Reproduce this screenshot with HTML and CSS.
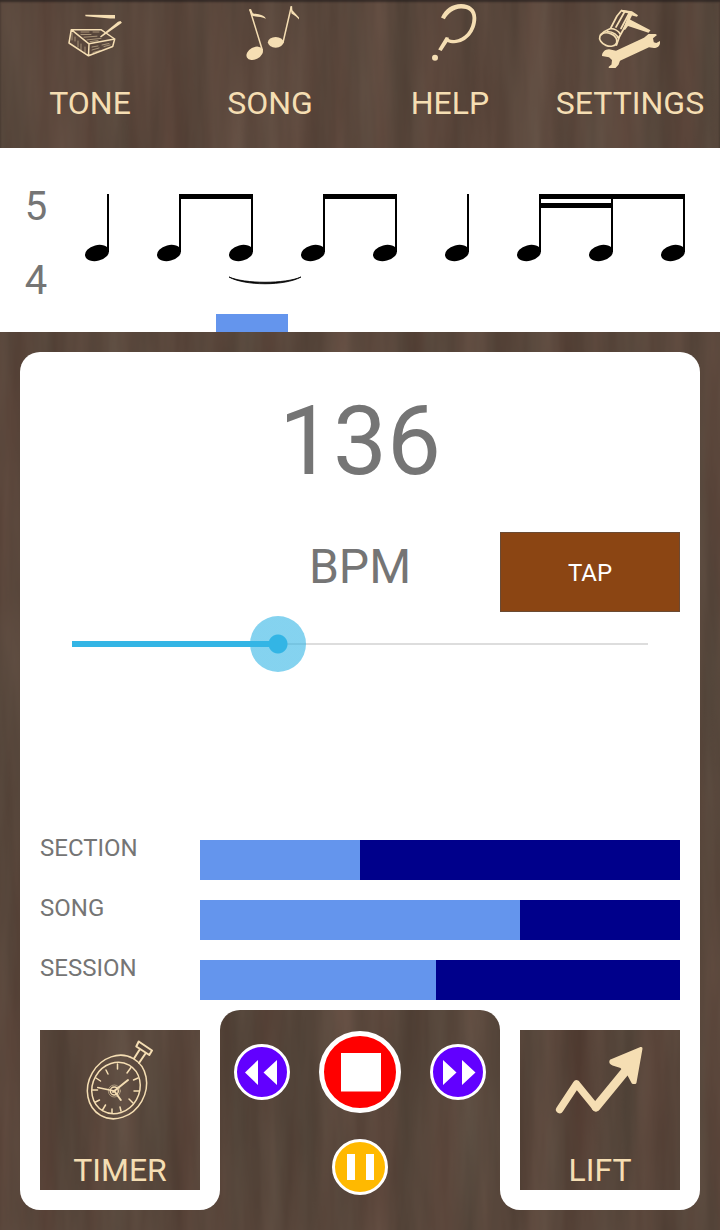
FILE: index.html
```html
<!DOCTYPE html>
<html lang="en">
<head>
<meta charset="utf-8">
<meta name="viewport" content="width=device-width, initial-scale=1">
<title>Metronome</title>
<link rel="stylesheet" href="styles.css">
</head>
<body class="wood">
<nav class="topbar">
  <button class="nav-item" type="button">
    <svg class="nav-icon" viewBox="0 0 80 72" aria-hidden="true">
      <path class="solid" d="M35.300 14.800L65 15v3.600l-5-.2-24.500-2.200z"/>
      <path class="solid" d="M50 36.500L68 21.800l2.500-.8 1.400 1.800-3 2.200-18 12.500z"/>
      <g class="line">
        <path stroke-width="1.500" d="M21.300 29.700H51L64.700 39 39 43.800zM21.300 29.700L19 43l19.500 12.800L39 43.800M38.500 55.800L62.700 46.500l2-7.500"/>
        <path stroke-width=".5" d="M31 32h8m4 0h6M31 34.500h10m-7 2.700l13-1m-10 3.700l14-1.500m-11 3.200l8-1M22 33v7m3-3v4m3 0v6m3-3v6m4-3v6M42 47l6-1m4-1l7-1.500M42 50l7-2m5-1.500l6-1.500M43 52.500l7-2"/>
      </g>
    </svg>
    <span class="nav-label">TONE</span>
  </button>
  <button class="nav-item" type="button">
    <svg class="nav-icon" viewBox="0 0 80 72" aria-hidden="true">
      <ellipse class="solid" cx="24.700" cy="53.300" rx="8.800" ry="6" transform="rotate(-28 24.700 53.300)"/>
      <ellipse class="solid" cx="45.700" cy="42.300" rx="7.800" ry="5.400"/>
      <path class="line" stroke-width="1.500" d="M32.300 50L20 10M53 42.500L61.200 7"/>
      <path class="solid" d="M19 9.500l2-.5 1.800 4.200c4 1.500 10 .3 13.200 5.500-4-2-8-1.500-13.500-2.700zM60.300 6.500l1.800-.5.300 4.200 6.600 7.300v2c-2.500-2.500-4-4-7.500-6z"/>
    </svg>
    <span class="nav-label">SONG</span>
  </button>
  <button class="nav-item" type="button">
    <svg class="nav-icon" viewBox="0 0 80 72" aria-hidden="true">
      <path class="solid" d="M31 17.500C35 9 42 4 51 4c9 0 15.300 5 15.300 14C66.300 31 57 43 44 43.200c-2.500 0-5-.5-6.500-1.300L31.600 51l-3.400-1.500L35.800 37l3.200.8-.4 1.200c2 1 4 1.200 6 1C54 39 62.500 30 62.500 18 62.500 11 57.500 8.300 51 8.500c-7.500.3-12.500 4.500-16.200 10.700z"/>
      <circle class="solid" cx="25" cy="57.700" r="3"/>
    </svg>
    <span class="nav-label">HELP</span>
  </button>
  <button class="nav-item" type="button">
    <svg class="nav-icon" viewBox="0 0 80 72" aria-hidden="true">
      <g class="line" stroke-width="1.700">
        <ellipse cx="18.300" cy="39.500" rx="9" ry="6.300" transform="rotate(22 18.300 39.500)"/>
        <path d="M10.500 35l4-3.500 6-3L27 16l4.500-5.500 10 2M26.500 45l3-8.500 8-14.500M20.500 28.500q7 .5 10 6M17.500 31.500c6 0 10 4 11 7M26 27L34.500 12M31 28.500L39 13.500"/>
      </g>
      <path class="solid" d="M31 9.700l11 1.600 6 4-1 1.400-5-1.200-2 4 20.500 10.700-2 2.600L38 26l-3 4-2-1 6-15.500-7-1.500z"/>
      <path class="solid" d="M12 56c0-4 3-6.800 7-6.800l7 1.500 28-13 4.500-3.700h7l1.500 1-4 3.200.8 4 2.500.8 3.700-2v2c0 3-3 5-6 5l-5-.8-29 13.500-1.500 4-3 3.300h-6.500l-.5-1 3-2.500.5-4.500-3-2.800z"/>
    </svg>
    <span class="nav-label">SETTINGS</span>
  </button>
</nav>

<section class="staff" aria-label="Rhythm">
  <div class="time-signature"><span>5</span><span>4</span></div>
  <svg class="score" viewBox="72 148 648 184" role="img" aria-label="Rhythm pattern">
    <defs>
      <g id="note">
        <ellipse cx="97" cy="253" rx="12.200" ry="7.800" transform="rotate(-14 97 253)"/>
        <path d="M107 194h2v58h-2z"/>
      </g>
    </defs>
    <use href="#note"/>
    <use href="#note" x="72"/>
    <use href="#note" x="144"/>
    <use href="#note" x="216"/>
    <use href="#note" x="288"/>
    <use href="#note" x="360"/>
    <use href="#note" x="432"/>
    <use href="#note" x="504"/>
    <use href="#note" x="576"/>
    <path d="M179 194h74v5h-74zM323 194h74v5h-74zM539 194h146v5H539zM539 203h74v5h-74z"/>
    <path d="M229 277c16 7 56 7 72 0-16 9-56 9-72 0z" stroke="#000" stroke-width=".8"/>
    <path class="playhead" d="M216 314h72v18h-72z"/>
  </svg>
</section>

<main class="main">
  <section class="card">
    <output class="tempo" id="tempo" for="speed">136</output>
    <div class="tempo-row">
      <label class="unit" for="speed">BPM</label>
      <button class="tap" type="button">TAP</button>
    </div>
    <input class="speed" id="speed" type="range" min="30" max="326" value="136">
    <div class="meters">
      <label class="meter-label" for="section">SECTION</label>
      <progress class="meter" id="section" max="480" value="160"></progress>
      <label class="meter-label" for="song">SONG</label>
      <progress class="meter" id="song" max="480" value="320"></progress>
      <label class="meter-label" for="session">SESSION</label>
      <progress class="meter" id="session" max="480" value="236"></progress>
    </div>
  </section>

  <div class="dock">
    <div class="dock-side">
      <button class="tile wood" type="button">
        <svg class="tile-icon" viewBox="-10 0 100 90" aria-hidden="true">
          <g class="line" stroke-width="1.500">
            <ellipse cx="37" cy="52" rx="28.500" ry="32.800" transform="rotate(30 37 52)"/>
            <ellipse cx="36" cy="53" rx="23.500" ry="26.300" transform="rotate(30 36 53)"/>
            <path stroke-width="2" d="M58.700 6.500l13.300 9-2.700 4.500-13-8.500zM60 14l-6 9.500M65.500 18.500L59 28"/>
            <path d="M37.500 29v5M51 32.500l-4 5.500M26 35l2 4M16 43l4.500 3M58 43l-4.500 2M59 56h-5M53 68l-4-4M41 76l-1-4M32 78v-4M22.500 75l3-5M15.500 67l4-2M12.500 55h5"/>
            <circle cx="34.300" cy="56" r="4"/>
            <circle stroke-width=".5" cx="34.300" cy="56" r="6"/>
            <path d="M34.300 56L17.700 52.500"/>
            <path stroke-width="2" d="M33 57l15-12M34.300 56l6.500 9"/>
          </g>
        </svg>
        <span class="tile-label">TIMER</span>
      </button>
    </div>
    <div class="dock-center">
      <div class="transport wood">
        <button class="round skip" type="button" aria-label="Previous">
          <svg viewBox="0 0 56 56"><circle cx="28" cy="28" r="26.500"/><path d="M24 16v25L11 28.500zM43 16v25L29.500 28.500z"/></svg>
        </button>
        <button class="round stop" type="button" aria-label="Stop">
          <svg viewBox="0 0 82 82"><circle cx="41" cy="41" r="38.500"/><path d="M22 22h40v38.500H22z"/></svg>
        </button>
        <button class="round skip next" type="button" aria-label="Next">
          <svg viewBox="0 0 56 56"><circle cx="28" cy="28" r="26.500"/><path d="M13 16v25l13.500-12.500zM32 16v25l13.500-12.500z"/></svg>
        </button>
        <button class="round pause" type="button" aria-label="Pause">
          <svg viewBox="0 0 56 56"><circle cx="28" cy="28" r="26.500"/><path d="M15 15h8v26h-8zM34 15h8v26h-8z"/></svg>
        </button>
      </div>
    </div>
    <div class="dock-side">
      <button class="tile wood" type="button">
        <svg class="tile-icon" viewBox="0 0 100 90" aria-hidden="true">
          <path class="line" stroke-width="7.500" d="M9.700 74.500L26.500 49l19.200 23.500"/>
          <path class="line" stroke-width="9" d="M46 72L78 33"/>
          <path class="solid joined" d="M91 13.500L61 26q-1 2 2 3l8 2.500 8 8.500 4 7.500h2z"/>
        </svg>
        <span class="tile-label">LIFT</span>
      </button>
    </div>
  </div>
</main>
<script src="app.js"></script>
</body>
</html>
```

FILE: styles.css
```css
* {
  box-sizing: border-box;
}

:root {
  --wheat: #f5deb3;
  --grey: #757575;
  --light-blue: #6495ed;
  --navy: #00008b;
  --accent: #33b5e5;
}

body {
  margin: 0;
  min-height: 100vh;
  display: flex;
  flex-direction: column;
  font-family: Roboto, "Liberation Sans", sans-serif;
  color: var(--grey);
}

button {
  margin: 0;
  padding: 0;
  border: 0;
  background: none;
  font: inherit;
  color: inherit;
  cursor: pointer;
}

svg {
  display: block;
}

.wood {
  background-color: #58463a;
  background-image: url("data:image/svg+xml,%3Csvg xmlns='http://www.w3.org/2000/svg' width='720' height='620'%3E%3Cfilter id='g' x='0' y='0' width='100%25' height='100%25' color-interpolation-filters='sRGB'%3E%3CfeTurbulence type='fractalNoise' baseFrequency='.03 .003' numOctaves='4' seed='7' stitchTiles='stitch'/%3E%3CfeColorMatrix values='.11 .06 0 0 .262 .11 .01 0 0 .216 .1 .01 0 0 .177 0 0 0 0 1'/%3E%3C/filter%3E%3Crect width='720' height='620' filter='url(%23g)'/%3E%3C/svg%3E");
  background-attachment: fixed;
}

.topbar {
  display: grid;
  grid-template-columns: repeat(4, 1fr);
  padding-bottom: 14px;
  box-shadow: inset 0 2px 2px rgba(30, 25, 25, 0.6);
  color: var(--wheat);
}

.nav-item {
  display: flex;
  flex-direction: column;
  align-items: center;
}

.nav-icon {
  width: 80px;
  height: 72px;
}

.nav-label {
  font-size: 32px;
  line-height: 62px;
}

.solid {
  fill: var(--wheat);
}

.line {
  fill: none;
  stroke: var(--wheat);
  stroke-linecap: round;
  stroke-linejoin: round;
}

.joined {
  stroke: var(--wheat);
  stroke-width: 3;
  stroke-linejoin: round;
}

.staff {
  display: grid;
  grid-template-columns: 1fr 9fr;
  background: #fff;
}

.time-signature {
  display: flex;
  flex-direction: column;
  align-items: center;
  padding-top: 22px;
  font-size: 40px;
  line-height: 74px;
}

.score {
  width: 100%;
}

.playhead {
  fill: var(--light-blue);
}

.main {
  flex: 1;
  display: flex;
  flex-direction: column;
  padding: 20px 20px 0;
}

.card {
  flex: 1;
  display: flex;
  flex-direction: column;
  padding: 33px 20px 10px;
  border-radius: 20px 20px 0 0;
  background: #fff;
}

.tempo {
  margin-bottom: 35px;
  font-size: 96px;
  line-height: 112px;
  text-align: center;
}

.tempo-row {
  display: grid;
  grid-template-columns: 1fr auto 1fr;
  margin-bottom: 4px;
}

.unit {
  grid-column: 2;
  font-size: 48px;
  line-height: 70px;
}

.tap {
  justify-self: end;
  width: 180px;
  height: 80px;
  padding-top: 2px;
  border: 1px solid #6b4a33;
  background: #8b4513;
  font-size: 24px;
  color: #fff;
}

.speed {
  appearance: none;
  height: 56px;
  margin: 0 4px 24px;
  background:
    linear-gradient(var(--accent), var(--accent)) 28px 50% / calc((100% - 56px) * var(--ratio, 0.358)) 6px no-repeat,
    linear-gradient(#ddd, #ddd) 50% 50% / calc(100% - 56px) 2px no-repeat;
}

.speed::-webkit-slider-thumb {
  appearance: none;
  width: 56px;
  height: 56px;
  border-radius: 50%;
  background: radial-gradient(circle, var(--accent) 9px, rgba(51, 181, 229, 0.6) 10px);
}

.meters {
  display: grid;
  grid-template-columns: 160px 1fr;
  row-gap: 20px;
  margin-top: auto;
}

.meter-label {
  font-size: 24px;
  line-height: 16px;
}

.meter {
  appearance: none;
  width: 100%;
  height: 40px;
  border: 0;
  background: var(--navy);
}

.meter::-webkit-progress-bar {
  background: var(--navy);
}

.meter::-webkit-progress-value {
  background: var(--light-blue);
}

.dock {
  display: grid;
  grid-template-columns: 200px 1fr 200px;
}

.dock-side {
  margin-bottom: 20px;
  padding: 20px;
  border-radius: 0 0 20px 20px;
  background: #fff;
}

.dock-center {
  background: linear-gradient(#fff, #fff) top / 100% 20px no-repeat;
}

.tile {
  display: flex;
  flex-direction: column;
  align-items: center;
  justify-content: space-between;
  width: 100%;
  height: 160px;
  padding-top: 5px;
  color: var(--wheat);
}

.tile-icon {
  width: 100px;
  height: 90px;
}

.tile-label {
  font-size: 32px;
  line-height: 40px;
}

.transport {
  display: grid;
  grid-template-columns: 1fr auto 1fr;
  align-items: center;
  row-gap: 26px;
  height: 100%;
  padding: 21px 14px 35px;
  border-radius: 20px 20px 0 0;
}

.round {
  width: 56px;
  height: 56px;
}

.round circle {
  stroke: #fff;
  stroke-width: 3;
}

.round path {
  fill: #fff;
}

.skip circle {
  fill: #6200ff;
}

.next {
  justify-self: end;
}

.stop {
  width: 82px;
  height: 82px;
}

.stop circle {
  fill: #f00;
  stroke-width: 5;
}

.pause {
  grid-column: 2;
  justify-self: center;
}

.pause circle {
  fill: #ffb900;
}
```

FILE: app.js
```js
const speed = document.getElementById('speed');
const tempo = document.getElementById('tempo');

speed.addEventListener('input', () => {
  const ratio = (speed.value - speed.min) / (speed.max - speed.min);
  tempo.textContent = speed.value;
  speed.style.setProperty('--ratio', ratio);
});
```
